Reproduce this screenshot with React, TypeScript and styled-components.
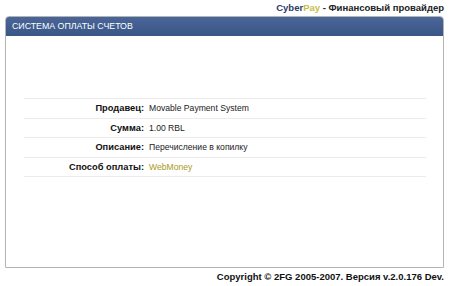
import React from 'react'
import styled, { createGlobalStyle } from 'styled-components'

const GlobalStyle = createGlobalStyle`
  body {
    margin: 0;
    background: #fff;
    font-family: Tahoma, "Liberation Sans", "DejaVu Sans", sans-serif;
    font-size: 9px;
    color: #000;
  }
`

const rows = [
  { label: 'Продавец:', value: 'Movable Payment System' },
  { label: 'Сумма:', value: '1.00 RBL' },
  { label: 'Описание:', value: 'Перечисление в копилку' },
  { label: 'Способ оплаты:', value: 'WebMoney', link: true }
]

export default function App() {
  return (
    <>
      <GlobalStyle />
      <Page>
        <TopBar>
          <Cyber>Cyber</Cyber><Pay>Pay</Pay> - Финансовый провайдер
        </TopBar>
        <Panel>
          <PanelHeader>СИСТЕМА ОПЛАТЫ СЧЕТОВ</PanelHeader>
          <PanelBody>
            <InfoTable>
              {rows.map(r => (
                <Row key={r.label}>
                  <Label>{r.label}</Label>
                  <Value $link={r.link}>{r.value}</Value>
                </Row>
              ))}
            </InfoTable>
          </PanelBody>
        </Panel>
        <Footer>Copyright © 2FG 2005-2007. Версия v.2.0.176 Dev.</Footer>
      </Page>
    </>
  )
}

const Page = styled.div`
  width: 450px;
  height: 286px;
  padding: 0 6px 0 5px;
  box-sizing: border-box;
  display: flex;
  flex-direction: column;
`

const TopBar = styled.div`
  height: 16px;
  line-height: 15px;
  text-align: right;
  font-size: 9.5px;
  font-weight: bold;
  color: #222;
`

const Cyber = styled.span`
  color: #2d3b66;
`

const Pay = styled.span`
  color: #c9bc4a;
`

const Panel = styled.div`
  height: 252px;
  border: 1px solid #b4b4b4;
  border-radius: 4px 4px 0 0;
  display: flex;
  flex-direction: column;
  box-sizing: border-box;
`

const PanelHeader = styled.div`
  height: 19px;
  line-height: 19px;
  background: linear-gradient(#4a6698, #3a5687);
  border-radius: 3px 3px 0 0;
  color: #fff;
  font-size: 8.8px;
  padding-left: 6px;
`

const PanelBody = styled.div`
  padding: 62px 17px 0 18px;
`

const InfoTable = styled.div`
  border-bottom: 1px solid #ececec;
`

const Row = styled.div`
  display: grid;
  grid-template-columns: 120px 1fr;
  column-gap: 5px;
  height: 19.5px;
  line-height: 19px;
  border-top: 1px solid #ececec;
  box-sizing: border-box;
`

const Label = styled.div`
  text-align: right;
  font-size: 9.3px;
  font-weight: bold;
  color: #111;
`

const Value = styled.div<{ $link?: boolean }>`
  font-size: 8.6px;
  color: ${p => (p.$link ? '#a89a22' : '#222')};
`

const Footer = styled.div`
  margin-top: 3px;
  text-align: right;
  font-size: 9.5px;
  font-weight: bold;
  color: #111;
`
